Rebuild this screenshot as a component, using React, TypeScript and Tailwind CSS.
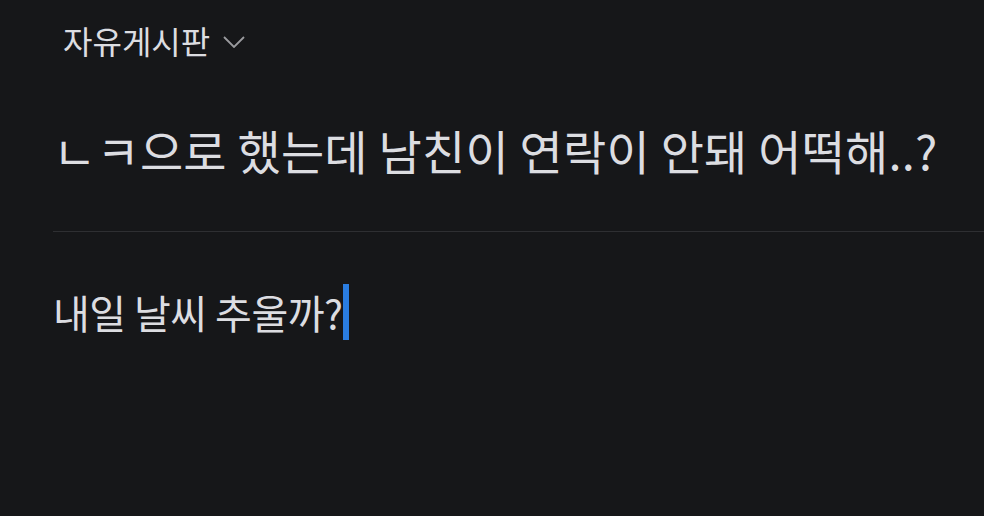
import React from 'react';

export default function App() {
  return (
    <div
      className="w-[984px] h-[516px] bg-[#161719] overflow-hidden text-[#dcdde1]"
      style={{ fontFamily: '"Noto Sans CJK KR", "Noto Sans", sans-serif' }}
    >
      {/* Board selector */}
      <div className="flex items-center pl-[63px] pt-[18px] h-[62px]">
        <span className="text-[32px] leading-[44px]">자유게시판</span>
        <svg width="22" height="12" viewBox="0 0 22 12" className="ml-[13px] mt-[4px]">
          <path d="M1 1 L11 11 L21 1" fill="none" stroke="#9a9b9e" strokeWidth="1.8" />
        </svg>
      </div>

      {/* Title */}
      <div className="pl-[53px] pt-[58px]">
        <h1 className="text-[47px] leading-[60px] font-normal tracking-[0.2px]">
          ㄴㅋ으로 했는데 남친이 연락이 안돼 어떡해..?
        </h1>
        <div className="mt-[51px] h-px bg-[#2e2f32]" />

        {/* Body */}
        <div className="pt-[50px] flex items-center">
          <span className="text-[40px] leading-[60px] tracking-[-0.5px]">내일 날씨 추울까?</span>
          <span className="ml-[1px] w-[6px] h-[56px] bg-[#2a7de1]" />
        </div>
      </div>
    </div>
  );
}
